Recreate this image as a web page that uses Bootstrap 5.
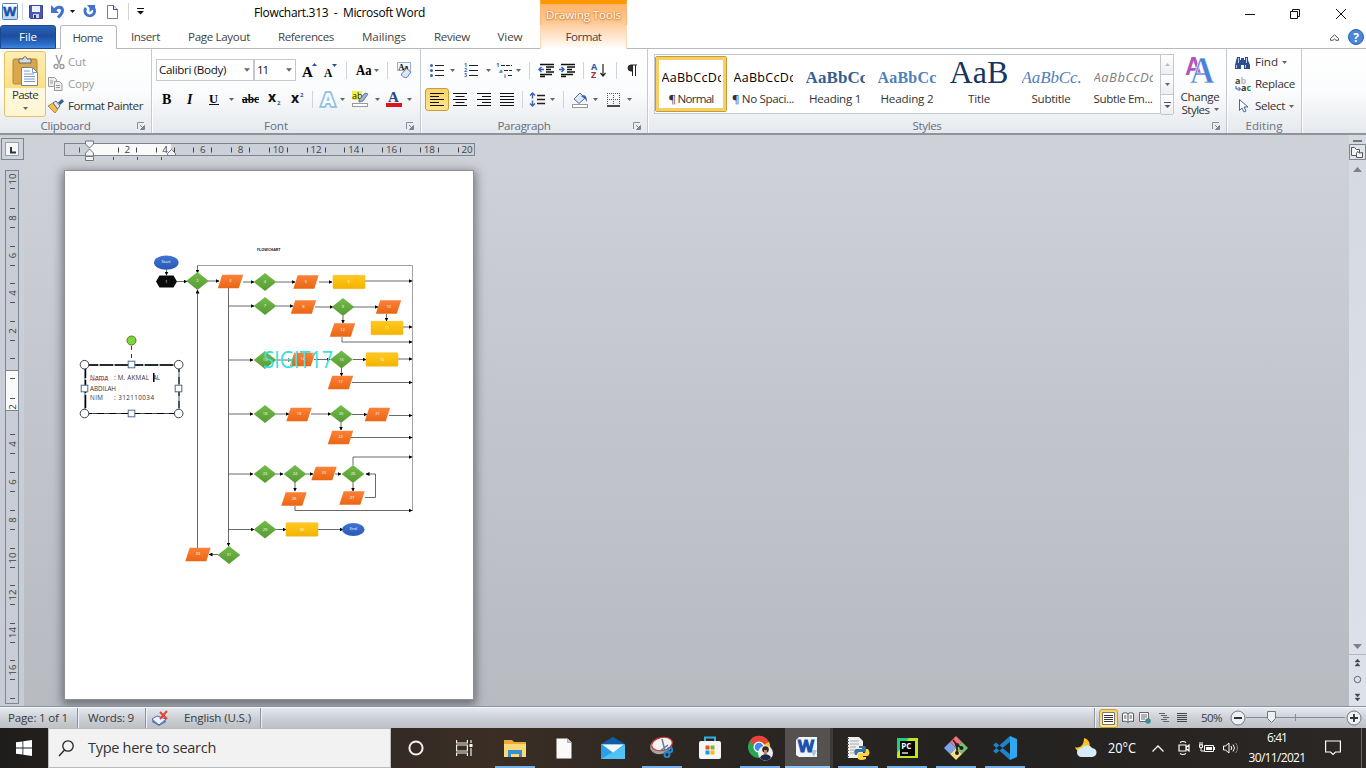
<!DOCTYPE html>
<html lang="en">
<head>
<meta charset="utf-8">
<title>Flowchart.313 - Microsoft Word</title>
<meta name="viewport" content="width=device-width, initial-scale=1">
<link rel="stylesheet" href="https://cdn.jsdelivr.net/npm/bootstrap@5.3.0/dist/css/bootstrap.min.css">
<style>
body{width:1366px;height:768px;overflow:hidden;font-family:"Open Sans","Noto Sans",sans-serif;font-size:11.6px;line-height:16px;color:#333;background:#fff}
svg{display:block;flex:none;overflow:visible}
[data-w]{display:inline-block;white-space:nowrap}
.titlebar{height:25px;display:grid;grid-template-columns:254px 286px 87px 1fr 139px}
.qat{display:grid;grid-template-columns:19px 6px 22px 20px 11px 22px 24px 9px 14px;align-items:center;justify-items:center;height:23px}
.title-text{font-size:12px;color:#000;padding-top:5px}
.ctx-head{background:linear-gradient(#ffb469,#ffcc9b);border-top:4px solid #ff9800;border-left:1px solid #f5b877;border-right:1px solid #f5b877;color:#fff;text-shadow:0 0 2px #c56a1d,0 1px 2px #c77c3b}
.tabs{height:24px;display:grid;grid-template-columns:56px 4px 57px 57px 90px 84px 72px 64px 56px 87px 1fr 22px 21px;border-bottom:1px solid #b6babf;color:#444}
.tab-i{display:flex;align-items:center;justify-content:center}
.tab-file{background:linear-gradient(#2b63b8,#1d4d9f 45%,#2a6bc4 80%,#3d86dc);color:#fff;border:1px solid #1b4a95;border-radius:3px 3px 0 0}
.tab-home{background:#fff;border:1px solid #b6babf;border-bottom:0;border-radius:3px 3px 0 0;height:24px;position:relative;padding-right:2px}
.tab-ctx{background:linear-gradient(#ffd0a2,#fff);border-left:1px solid #fbd9b5;border-right:1px solid #fbd9b5}
.ribbon{height:86px;display:grid;grid-template-columns:152px 269px 227px 579px 75px 1fr;background:linear-gradient(#fff,#fbfcfd 50%,#e5e8ed);border-bottom:2px solid #8f949b}
.grp{border-right:1px solid #c5cad1;box-shadow:1px 0 #fff;display:flex;flex-direction:column;min-width:0}
.grp-body{height:69px;flex:none}
.grp-label{display:grid;grid-template-columns:1fr 20px;color:#666f7c;height:15px;align-items:center}
.grp-label span{justify-self:center}
.grp-label svg{justify-self:end;margin-right:6px}
.paste-btn{width:42px;height:66px;margin:2px 2px 0 4px;border:1px solid #e5c365;border-radius:3px;background:linear-gradient(#fdeeb4,#fbdf87 56%,#fff8dc 57%,#fff6d2);align-items:center}
.cmds{padding-top:2px}
.cmd{height:22px;display:grid;grid-template-columns:20px 1fr;align-items:center}
.off{color:#9a9a9a}
.trow{display:grid;align-items:center;justify-items:center;height:22px}
.fr1{grid-template-columns:98px 42px 26px 16px 16px 19px 6px 16px 18px;margin:10px 0 0 4px}
.fr2{grid-template-columns:22px 24px 24px 10px 28px 20px 26px 4px 27px 3px 32px 3px 30px 1px;margin:7px 0 0 4px}
.pr1{grid-template-columns:25px 7px 29px 7px 24px 5px 16px 17px 26px 6px 24px 12px 20px;margin:10px 0 0 3px}
.pr2{grid-template-columns:25px 22px 25px 22px 9px 21px 8px 15px 19px 10px 26px 6px;margin:7px 0 0 3px}
.combo{border:1px solid #c4c8ce;background:#fff;height:22px;width:100%;display:flex;align-items:center;justify-content:space-between;padding:0 3px 0 2px;color:#111}
.vsep{width:1px;height:17px;background:#d0d4da}
.serif{font-family:"Liberation Serif",serif;color:#1f1f1f;font-weight:700}
.tog{width:24px;height:23px;border:1px solid #c99c3a;border-radius:3px;background:linear-gradient(#fbd36c,#fee58c);display:flex;align-items:center;justify-content:center}
.status .tog{height:19px;width:19px}
.gallery{margin:5px 0 0 6px;width:506px;height:60px;border:1px solid #c4c8ce;border-right:0;background:#fff;display:grid;grid-template-columns:repeat(7,72px)}
.sty{display:flex;flex-direction:column;align-items:center;color:#333}
.prev{width:59px;height:36px;overflow:hidden;white-space:nowrap;color:#000;font-size:12.5px;line-height:45px;flex:none}
.sty.on{outline:3px solid #f6cf67;outline-offset:-4px;border:1px solid #c79a35;border-radius:2px;margin:1px 0}
.sty.on .prev{height:34px;line-height:41px}
.h-ser{font-family:"Liberation Serif",serif}
.prev.h1p{font-size:17px;font-weight:700;color:#365f91}.prev.h2p{font-size:16px;font-weight:700;color:#4f81bd}
.prev.tip{font-size:32px;color:#17365d;line-height:34px}
.prev.sbp{font-size:17px;font-style:italic;color:#4f81bd}.prev.sep{font-size:13px;font-style:italic;color:#808080}
.gbtns{width:14px;height:60px;margin-top:5px;display:grid;grid-template-rows:20px 20px 20px;border:1px solid #c4c8ce}
.gbtns div{display:flex;align-items:center;justify-content:center;border-bottom:1px solid #c4c8ce;background:linear-gradient(#fff,#eceef2)}
.chg{width:52px;padding-top:6px;line-height:13px}
.chg>span{margin-top:5px}
.edit-l{line-height:15px}
.work{height:572px;display:grid;grid-template-columns:24px 1fr 17px;background:linear-gradient(#cfd2d8,#c3c6cc 45%,#b7bbc0)}
.lft{background:linear-gradient(#cbd0d9,#c6ccd6)}
.rgt{background:linear-gradient(#d4d9e2,#dce1ea)}
.page-sheet{width:410px;height:530px;margin-left:40px;background:#fff;border:1px solid #8d9197;box-shadow:0 3px 9px 2px rgba(60,64,70,.6)}
.status{height:21px;display:grid;grid-template-columns:78px 66px 32px 85px 834px 27px 12px 22px 16px 20px 35px 1fr;background:linear-gradient(#e4e8f0,#cdd1d7 50%,#bdc1c5);border-top:1px solid #f4f6f9;box-shadow:0 -1px #8f949b;align-items:center;justify-items:center;color:#3b3b3b;position:relative}
.bar{border-right:1px solid #8e949c;box-shadow:1px 0 #eef;height:20px;width:100%;display:flex;align-items:center}
.task{height:40px;background:linear-gradient(90deg,#1f1d1b,#332a24 28%,#3b2e24 36%,#2c2723 50%,#242220 70%,#2a2725);display:grid;grid-template-columns:48px 343px 50px 46px 56px 41px 58px 40px 56px 44px 50px 52px 46px 52px 46px 73px 36px 34px 17px 30px 16px 14px 58px 35px 1fr;align-items:center;color:#fff}
.task>div{height:40px;display:flex;align-items:center;justify-content:center;font-size:12px}
.task .run{border-bottom:2px solid #76b2e8;width:40px;justify-self:center;padding-top:2px}
.task .act{background:#55514e;width:45px;justify-self:center;border-bottom:2px solid #8cc3f2;box-shadow:3px 0 #3d3a37}
.task .find{background:#f2f2f2;color:#333;justify-content:flex-start;border:1px solid #bbb;font-size:14.5px;gap:14px}
</style>
</head>
<body>
<svg width="0" height="0" class="position-absolute">
<symbol id="car" viewBox="0 0 7 4"><path d="M0 0h7L3.5 4z" fill="#666"/></symbol>
<symbol id="dlg" viewBox="0 0 8 8"><path d="M.5 7V.5H7" fill="none" stroke="#8a8f97"/><path d="M3 3l3 3M7.5 3.5v4h-4z" stroke="#7d838c" fill="#7d838c"/></symbol>
<linearGradient id="wg" x2="0" y2="1"><stop stop-color="#fff"/><stop offset="1" stop-color="#b9d0ee"/></linearGradient>
</svg>

<header class="titlebar">
 <div class="qat">
  <svg width="16" height="17" viewBox="0 0 16 17"><rect x=".5" y=".5" width="15" height="16" rx="1" fill="url(#wg)" stroke="#4a7fc0"/><text x="1.2" y="13" font-size="12.5" font-weight="700" fill="#1b51a4" textLength="13" lengthAdjust="spacingAndGlyphs" stroke="#1b51a4" stroke-width=".5">W</text></svg>
  <div class="vsep"></div>
  <svg width="14" height="14" viewBox="0 0 14 14"><path d="M.5.5h13v13h-12l-1-1z" fill="#4b57b5" stroke="#3b459b"/><path d="M3 1h8v6H3z" fill="#eef2fb"/><path d="M4 9h6v4H4z" fill="#cfd6e8"/><path d="M5 10h2v3H5z" fill="#30397f"/></svg>
  <svg width="13" height="13" viewBox="0 0 13 13"><path d="M3.500 5.500C6 1 11.500 1.500 11.500 5.500c0 3-2 4.500-4.500 7" fill="none" stroke="#4173d0" stroke-width="3"/><path d="M0 0v8h8z" fill="#4173d0"/></svg>
  <svg width="5" height="3" viewBox="0 0 7 4"><path d="M0 0h7L3.500 4z" fill="#111"/></svg>
  <svg width="13" height="13" viewBox="0 0 13 13"><path d="M3 3a4.800 4.800 0 1 0 7.500 0" fill="none" stroke="#4173d0" stroke-width="3"/><path d="M4 0h8v3L6.500 7V3z" fill="#4173d0"/></svg>
  <svg width="11" height="14" viewBox="0 0 11 14"><path d="M.5.5h6l4 4v9H.5z" fill="#fff" stroke="#6f7fa0"/><path d="M6.500.5v4h4" fill="#dde6f5" stroke="#344a77"/></svg>
  <div class="vsep"></div>
  <svg width="7" height="7" viewBox="0 0 7 7"><path d="M0 .5h7" stroke="#111"/><path d="M0 3h7L3.500 6.500z" fill="#111"/></svg>
 </div>
 <div class="title-text"><span data-w="171">Flowchart.313&nbsp; -&nbsp; Microsoft Word</span></div>
 <div class="ctx-head d-flex align-items-center justify-content-center"><span data-w="75">Drawing Tools</span></div>
 <div></div>
 <svg width="139" height="25" viewBox="1227 0 139 25" fill="none" stroke="#111"><path d="M1245 14.500h10M1336 9l10 10M1346 9l-10 10M1290.500 11.500h7v7h-7zM1292.500 11v-1.500h7v7h-1.500"/></svg>
</header>
<nav class="tabs">
 <div class="tab-i tab-file"><span data-w="18">File</span></div><div></div>
 <div class="tab-i tab-home"><span data-w="30">Home</span></div>
 <div class="tab-i"><span data-w="29">Insert</span></div>
 <div class="tab-i"><span data-w="62">Page Layout</span></div>
 <div class="tab-i"><span data-w="56">References</span></div>
 <div class="tab-i"><span data-w="44">Mailings</span></div>
 <div class="tab-i"><span data-w="36">Review</span></div>
 <div class="tab-i pe-1"><span data-w="25">View</span></div>
 <div class="tab-i tab-ctx"><span data-w="36">Format</span></div><div></div>
 <div class="tab-i"><svg width="9" height="7" viewBox="0 0 9 7" fill="none" stroke="#555"><path d="M.5 4.500L4.500.8l4 3.700v1.800H6L4.500 5 3 6.300H.5z"/></svg></div>
 <div class="tab-i"><svg width="16" height="16" viewBox="0 0 16 16"><circle cx="8" cy="8" r="7.500" fill="#4a86da" stroke="#2d62b2"/><text x="8" y="12.500" font-size="12" font-weight="700" fill="#fff" text-anchor="middle">?</text></svg></div>
</nav>

<section class="ribbon">
 <div class="grp">
  <div class="grp-body d-flex">
   <div class="paste-btn d-flex flex-column">
    <svg width="28" height="31" viewBox="0 0 28 31" class="mt-1"><rect x="2" y="3" width="24" height="25" rx="1.500" fill="#dba74d" stroke="#b98432"/><path d="M8 7V3h4c0-3 4-3 4 0h4v4z" fill="#d8dce2" stroke="#666"/><path d="M10.500 11.500h11l5 5v13h-16z" fill="#fff" stroke="#6b83ad"/><path d="M21.500 11.500v5h5M13 15h6M13 18h10M13 20.500h11M13 23h11M13 25.500h11" stroke="#7d9ac6" fill="none"/></svg>
    <span data-w="26">Paste</span>
    <svg width="5" height="3" class="mt-1"><use href="#car"/></svg>
   </div>
   <div class="cmds flex-grow-1">
    <div class="cmd off"><svg width="14" height="15" viewBox="0 0 14 15" fill="none" stroke="#999" stroke-width="1.300" class="ms-1"><path d="M4 0l3.500 9.500M10 0L6.500 9.500"/><circle cx="4" cy="11.500" r="2"/><circle cx="10" cy="11.500" r="2"/></svg><span data-w="18">Cut</span></div>
    <div class="cmd off"><svg width="15" height="14" viewBox="0 0 15 14" fill="#eee" stroke="#999"><path d="M.5.5h6l2 2v7h-8z"/><path d="M6.500 4.500h5l2.500 2.500v6.500H6.500zM8 8.500h4M8 10.500h4M2 4h3M2 6h3"/></svg><span data-w="26">Copy</span></div>
    <div class="cmd"><svg width="16" height="14" viewBox="0 0 16 14"><path d="M0 7l5-3 5 6-3 4z" fill="#f3c14b" stroke="#8d6a1f" stroke-width=".7"/><path d="M5 4l3-2 4 5-2.500 3z" fill="#dde5f2" stroke="#667"/><path d="M10 3.500L14 0l2 2.500-4 3.500z" fill="#3d5b9c"/></svg><span data-w="75">Format Painter</span></div>
   </div>
  </div>
  <div class="grp-label"><span data-w="50">Clipboard</span><svg width="8" height="8"><use href="#dlg"/></svg></div>
 </div>

 <div class="grp">
  <div class="grp-body">
   <div class="trow fr1">
    <div class="combo"><span data-w="67">Calibri (Body)</span><svg width="6" height="4"><use href="#car"/></svg></div>
    <div class="combo"><span data-w="11">11</span><svg width="6" height="4"><use href="#car"/></svg></div>
    <svg width="15" height="14" viewBox="0 0 15 14"><text x="0" y="13.500" font-size="15" class="serif">A</text><path d="M10 3h5l-2.500-3z" fill="#2c4f9b"/></svg>
    <svg width="13" height="14" viewBox="0 0 13 14"><text x="0" y="13.500" font-size="11.500" class="serif">A</text><path d="M8 1h5l-2.500 3z" fill="#2c4f9b"/></svg>
    <div class="vsep"></div>
    <svg width="15" height="14" viewBox="0 0 15 14"><text y="12" font-size="14" class="serif" textLength="15.500" lengthAdjust="spacingAndGlyphs">Aa</text></svg>
    <svg width="5" height="3"><use href="#car"/></svg>
    <div class="vsep"></div>
    <svg width="17" height="16" viewBox="0 0 17 16"><path d="M1.500.5h13v8h-13z" fill="#f4f8ff" stroke="#9aa9c4"/><text x="2.500" y="7.500" font-size="8" class="serif">Aa</text><path d="M5.500 12l5-5.500 4.500 3.500-4 5.500c-2 .5-6-1-5.500-3.500z" fill="#dbe6f8" stroke="#5d7db5"/></svg>
   </div>
   <div class="trow fr2">
    <svg width="10" height="12" viewBox="0 0 10 12"><text y="10.500" font-size="14" class="serif">B</text></svg>
    <svg width="8" height="12" viewBox="0 0 8 12"><text x="1" y="10.500" font-size="14" font-style="italic" class="serif">I</text></svg>
    <svg width="10" height="12" viewBox="0 0 10 12"><text y="9.500" font-size="12.500" class="serif">U</text><path d="M0 11.500h10" stroke="#111"/></svg>
    <svg width="5" height="3"><use href="#car"/></svg>
    <svg width="17" height="12" viewBox="0 0 17 12"><text y="9.500" font-size="12" class="serif" textLength="17" lengthAdjust="spacingAndGlyphs">abc</text><path d="M0 6.500h17" stroke="#111"/></svg>
    <svg width="13" height="12" viewBox="0 0 13 12"><text y="9" font-size="14" font-weight="700" fill="#111">x</text><text x="9" y="12" font-size="6" fill="#2b57ad" font-weight="700">2</text></svg>
    <svg width="13" height="12" viewBox="0 0 13 12"><text y="10" font-size="14" font-weight="700" fill="#111">x</text><text x="9" y="4" font-size="6" fill="#2b57ad" font-weight="700">2</text></svg>
    <div class="vsep"></div>
    <svg width="16" height="15" viewBox="0 0 16 15"><text x="1.500" y="14" font-size="18" font-weight="700" fill="#fff" stroke="#8fc0e4" stroke-width="3.500" textLength="13" lengthAdjust="spacingAndGlyphs" paint-order="stroke">A</text></svg>
    <svg width="5" height="3"><use href="#car"/></svg>
    <svg width="17" height="16" viewBox="0 0 17 16"><rect width="10" height="9" fill="#f6ee4e"/><text y="7.500" font-size="9" fill="#222">ab</text><path d="M7 9l6-7 3 1-5 7-4 1z" fill="#9db3d8" stroke="#49618f" stroke-width=".8"/><rect x=".5" y="12.500" width="15" height="3" fill="#fff" stroke="#999"/></svg>
    <svg width="5" height="3"><use href="#car"/></svg>
    <svg width="16" height="16" viewBox="0 0 16 16"><text x="2" y="11" font-size="15" fill="#27498e" font-family="Liberation Serif" font-weight="700">A</text><rect y="12" width="16" height="4" fill="#e1121b"/></svg>
    <svg width="5" height="3"><use href="#car"/></svg>
   </div>
  </div>
  <div class="grp-label"><span data-w="24">Font</span><svg width="8" height="8"><use href="#dlg"/></svg></div>
 </div>

 <div class="grp">
  <div class="grp-body">
   <div class="trow pr1">
    <svg width="14" height="13" viewBox="0 0 14 13"><path d="M5 1.500h9M5 6.500h9M5 11.500h9" stroke="#222"/><g fill="#3a62b4"><circle cx="1.500" cy="1.500" r="1.500"/><circle cx="1.500" cy="6.500" r="1.500"/><circle cx="1.500" cy="11.500" r="1.500"/></g></svg>
    <svg width="5" height="3"><use href="#car"/></svg>
    <svg width="14" height="14" viewBox="0 0 14 14"><path d="M5 2.500h9M5 7.500h9M5 12.500h9" stroke="#222"/><g fill="#3a62b4" font-size="5.500" font-weight="700"><text y="4">1</text><text y="9">2</text><text y="14">3</text></g></svg>
    <svg width="5" height="3"><use href="#car"/></svg>
    <svg width="17" height="15" viewBox="0 0 17 15"><path d="M5 2.500h11M8 7.500h8M12 12.500h4" stroke="#222" stroke-dasharray="4 1"/><g fill="#3a62b4" font-size="6" font-weight="700"><text y="4">1</text><text x="3" y="9.500">a</text><text x="8" y="15">i</text></g></svg>
    <svg width="5" height="3"><use href="#car"/></svg>
    <div class="vsep"></div>
    <svg width="16" height="13" viewBox="0 0 16 13"><path d="M2 .5h14M8 3h8M8 5.500h5M8 8h8M2 10.500h12M2 12.500h5" stroke="#111" stroke-width="1.300"/><path d="M6 5.500H1M3.500 3L1 5.500 3.500 8" stroke="#3a62b4" fill="none" stroke-width="1.500"/></svg>
    <svg width="16" height="13" viewBox="0 0 16 13"><path d="M2 .5h14M8 3h8M8 5.500h5M8 8h8M2 10.500h12M2 12.500h5" stroke="#111" stroke-width="1.300"/><path d="M0 5.500h5M2.500 3L5 5.500 2.500 8" stroke="#3a62b4" fill="none" stroke-width="1.500"/></svg>
    <div class="vsep"></div>
    <svg width="15" height="16" viewBox="0 0 15 16"><text x="0" y="7.500" font-size="9" font-weight="700" fill="#2c57ad">A</text><text x="0" y="15.500" font-size="9" font-weight="700" fill="#a03341">Z</text><path d="M12 2v12M9.500 11l2.500 3 2.500-3" stroke="#222" stroke-width="1.200" fill="none"/></svg>
    <div class="vsep"></div>
    <svg width="10" height="13" viewBox="0 0 10 13"><path d="M10 1H4a3 3 0 0 0 0 6h1V1M5.500 1v11M8.500 1v11" stroke="#222" fill="#333"/></svg>
   </div>
   <div class="trow pr2">
    <div class="tog"><svg width="14" height="13" viewBox="0 0 14 13"><path d="M0 .5h14M0 3.500h9M0 6.500h14M0 9.500h9M0 12.500h14" stroke="#111"/></svg></div>
    <svg width="14" height="13" viewBox="0 0 14 13"><path d="M0 .5h14M2.500 3.500h9M0 6.500h14M2.500 9.500h9M0 12.500h14" stroke="#111"/></svg>
    <svg width="14" height="13" viewBox="0 0 14 13"><path d="M0 .5h14M5 3.500h9M0 6.500h14M5 9.500h9M0 12.500h14" stroke="#111"/></svg>
    <svg width="14" height="13" viewBox="0 0 14 13"><path d="M0 .5h14M0 3.500h14M0 6.500h14M0 9.500h14M0 12.500h14" stroke="#111"/></svg>
    <div class="vsep"></div>
    <svg width="15" height="15" viewBox="0 0 15 15"><path d="M7 3.500h8M7 7.500h8M7 11.500h8" stroke="#222" stroke-width="1.300"/><path d="M2.500 1v5.500M2.500 8.500V14M0 3.500L2.500 1 5 3.500M0 11.500L2.500 14 5 11.500" fill="none" stroke="#3a62b4" stroke-width="1.400"/></svg>
    <svg width="5" height="3"><use href="#car"/></svg>
    <div class="vsep"></div>
    <svg width="17" height="16" viewBox="0 0 17 16"><path d="M2 7l6-6 5 5-6 5.500z" fill="#dfe8f6" stroke="#506c9e"/><path d="M9 4c4-2 6 0 6 6l-2-3" fill="#3a62b4"/><rect x=".5" y="12.500" width="15" height="3" fill="#fff" stroke="#999"/></svg>
    <svg width="5" height="3"><use href="#car"/></svg>
    <svg width="13" height="14" viewBox="0 0 13 14"><path d="M.5 0v12M12.500 0v12M6.500 0v12M0 .5h13M0 6.500h13" stroke="#555" stroke-dasharray="1 1"/><path d="M0 13h13" stroke="#111" stroke-width="1.500"/></svg>
    <svg width="5" height="3"><use href="#car"/></svg>
   </div>
  </div>
  <div class="grp-label"><span data-w="53">Paragraph</span><svg width="8" height="8"><use href="#dlg"/></svg></div>
 </div>

 <div class="grp">
  <div class="grp-body d-flex">
   <div class="gallery">
    <div class="sty on"><div class="prev"><span data-w="62">AaBbCcDc</span></div><span data-w="45">¶ Normal</span></div>
    <div class="sty"><div class="prev"><span data-w="62">AaBbCcDc</span></div><span data-w="62">¶ No Spaci...</span></div>
    <div class="sty"><div class="prev h-ser h1p"><span data-w="62">AaBbCc</span></div><span data-w="52">Heading 1</span></div>
    <div class="sty"><div class="prev h-ser h2p"><span data-w="59">AaBbCc</span></div><span data-w="53">Heading 2</span></div>
    <div class="sty"><div class="prev h-ser tip"><span data-w="59">AaB</span></div><span data-w="22">Title</span></div>
    <div class="sty"><div class="prev h-ser sbp"><span data-w="60">AaBbCc.</span></div><span data-w="39">Subtitle</span></div>
    <div class="sty"><div class="prev sep"><span data-w="62">AaBbCcDc</span></div><span data-w="59">Subtle Em...</span></div>
   </div>
   <div class="gbtns"><div><svg width="5" height="3" viewBox="0 0 7 4"><path d="M0 4h7L3.500 0z" fill="#bbb"/></svg></div><div><svg width="5" height="3"><use href="#car"/></svg></div><div><svg width="7" height="6" viewBox="0 0 7 6"><path d="M0 .5h7" stroke="#555"/><path d="M.5 3h6l-3 3z" fill="#555"/></svg></div></div>
   <div class="chg d-flex flex-column align-items-center">
    <svg width="30" height="30" viewBox="0 0 30 30"><text x="0" y="20" font-size="26" font-family="Liberation Sans" font-weight="700" fill="#b455bd" textLength="17" lengthAdjust="spacingAndGlyphs">A</text><text x="5" y="28" font-size="37" font-family="Liberation Serif" font-weight="700" fill="#4a82d8" stroke="#fff" stroke-width=".6" textLength="24.500" lengthAdjust="spacingAndGlyphs">A</text></svg>
    <span data-w="39">Change</span>
    <div class="d-flex align-items-center gap-1"><span data-w="28">Styles</span><svg width="5" height="3"><use href="#car"/></svg></div>
   </div>
  </div>
  <div class="grp-label"><span data-w="29">Styles</span><svg width="8" height="8"><use href="#dlg"/></svg></div>
 </div>

 <div class="grp">
  <div class="grp-body cmds ps-2">
   <div class="cmd"><svg width="15" height="13" viewBox="0 0 15 13"><path d="M2 1h3v3h1V2h3v2h1V1h3v3l2 5v4H9V9H6v4H0V9z" fill="#2d4f8f"/><path d="M1.500 9v3M10.500 9v3M3.500 2v5M11.500 2v5" stroke="#b4cbef"/></svg><div class="d-flex align-items-center"><span data-w="23">Find</span><svg width="5" height="3" class="ms-1"><use href="#car"/></svg></div></div>
    <div class="cmd"><svg width="16" height="15" viewBox="0 0 16 15"><text y="7" font-size="9" font-weight="700" fill="#444">a<tspan fill="#bbb">b</tspan></text><text x="6" y="14" font-size="9" font-weight="700" fill="#333">a<tspan fill="#1c8a3c">c</tspan></text><path d="M1 9v3h4M3.500 10l2 2-2 2" fill="none" stroke="#2c57ad"/></svg><span data-w="40">Replace</span></div>
   <div class="cmd"><svg width="10" height="14" viewBox="0 0 10 14" class="ms-1"><path d="M.5.500v11L3 9l2 4 2-1-2-4h4z" fill="#fff" stroke="#4a669c"/></svg><div class="d-flex align-items-center"><span data-w="30">Select</span><svg width="5" height="3" class="ms-1"><use href="#car"/></svg></div></div>
  </div>
  <div class="text-center edit-l"><span data-w="37" class="text-secondary">Editing</span></div>
 </div>
</section>

<main class="work">
 <div class="lft"><svg id="vr" width="24" height="572" viewBox="0 135 24 572"></svg></div>
 <div>
  <svg id="hr" width="470" height="35" viewBox="24 135 470 35"></svg>
  <div class="page-sheet"><svg id="doc" width="408" height="528" viewBox="65 171 408 528"></svg></div>
 </div>
 <div class="rgt"><svg width="17" height="572" viewBox="1349 135 17 572"><path d="M1353 141h9" stroke="#777" stroke-width="2"/><path d="M1349.500 144.500h16v15h-16z" fill="#dfe3ea" stroke="#80858d"/><path d="M1351.500 147.500h3l2 2h3v6h-8z" fill="#f3f5f8" stroke="#555"/><path d="M1357.500 151.500l2 1.500 3-.5v5h-6v-4z" fill="#f3f5f8" stroke="#555"/><path d="M1353 172h9l-4.500-5zM1353 644h9l-4.500 5z" fill="#7c828c"/><path d="M1349 654.500h17" stroke="#b3b8c1"/><path d="M1355 662h5l-2.500-3zM1355 666h5l-2.500-3zM1355 694h5l-2.500 3zM1355 698h5l-2.500 3z" fill="#444" stroke="#444" stroke-width=".4"/><circle cx="1357.500" cy="679.500" r="3.200" fill="none" stroke="#666"/></svg></div>
</main>

<footer class="status">
 <div class="bar ps-2"><span data-w="60">Page: 1 of 1</span></div>
 <div class="bar ps-2 ms-1"><span data-w="46">Words: 9</span></div>
 <svg width="16" height="15" viewBox="0 0 16 15"><path d="M0 8l5-3 9 3-7 6z" fill="#eef4fc" stroke="#466fae"/><path d="M0 9l7 5 7-5v2l-7 4-7-4z" fill="#4d78bb"/><path d="M8 1l7 7M15 0L8 8" stroke="#e0472f" stroke-width="2"/></svg>
 <div class="bar ps-2"><span data-w="67">English (U.S.)</span></div>
 <div class="bar"></div>
 <div class="tog"><svg width="13" height="13" viewBox="0 0 13 13"><path d="M.5.500h12v12H.5z" fill="#fff" stroke="#777"/><path d="M2 3.500h9M2 5.500h9M2 7.500h9M2 9.500h9" stroke="#333"/></svg></div>
 <svg width="12" height="12" viewBox="0 0 12 12"><path d="M.5 1.500c2-1 4-1 5.500.500 1.500-1.500 3.500-1.500 5.500-.500v8c-2-.500-4-.500-5.500 1-1.500-1.500-3.500-1.500-5.500-1zM6 2v8M2 4h2.500M2 6h2.500M7.500 4H10M7.500 6H10" fill="#fff" stroke="#555"/></svg>
 <svg width="12" height="12" viewBox="0 0 12 12"><path d="M.5.500h9v9h-9zM2 3h6M2 5h6M2 7h4" fill="#fff" stroke="#666"/><circle cx="9" cy="9" r="2.800" fill="#3c8b9c"/></svg>
 <svg width="10" height="10" viewBox="0 0 10 10"><path d="M0 .5h6M2 2.500h6M4 4.500h6M2 6.500h6M4 8.500h6" stroke="#666"/></svg>
 <svg width="10" height="10" viewBox="0 0 10 10"><path d="M0 .5h10M0 2.500h10M0 4.500h10M0 6.500h10M0 8.500h10" stroke="#444"/></svg>
 <span data-w="21" class="ms-1">50%</span>
 <svg width="139" height="20" viewBox="1227 707 139 20"><path d="M1246 716.500h99" stroke="#888d94"/><path d="M1295.500 713v7" stroke="#888d94"/><g fill="#edf0f4" stroke="#72777f"><circle cx="1238" cy="717" r="7"/><circle cx="1354" cy="717" r="7"/><path d="M1267.500 710.500h8v7l-4 4-4-4z"/></g><path d="M1234 717h8M1350 717h8M1354 713v8" stroke="#333" stroke-width="1.800"/></svg>
</footer>

<div class="task">
 <div><svg width="16" height="16" viewBox="0 0 16 16" fill="#fff"><path d="M0 2.300L6.500 1.400v6.200H0zM7.300 1.300L16 0v7.600H7.300zM0 8.400h6.500v6.200L0 13.700zM7.300 8.400H16V16l-8.700-1.300z"/></svg></div>
 <div class="find"><svg width="17" height="17" viewBox="0 0 17 17" fill="none" stroke="#222" stroke-width="1.300" class="ms-2"><circle cx="11" cy="6" r="5.200"/><path d="M7.500 10L2 16"/></svg><span data-w="128">Type here to search</span></div>
 <div><svg width="16" height="16"><circle cx="8" cy="8" r="6.600" fill="none" stroke="#f2f2f2" stroke-width="2"/></svg></div>
 <div><svg width="17" height="16" viewBox="0 0 17 16" fill="none" stroke="#eee" stroke-width="1.200"><path d="M.6 0v3h10.800V0M.6 16v-3h10.800v3M.6 5h10.800v6H.6zM15 0v3M15 8v8"/><path d="M13.500 4h3v3h-3z" fill="#fff" stroke="none"/></svg></div>
 <div class="run"><svg width="22" height="19" viewBox="0 0 22 19"><path d="M0 1h8l2 2h12v15H0z" fill="#e9a93c"/><path d="M0 5h22v13H0z" fill="#fcd978"/><path d="M4 18v-7h14v7h-3v-3H7v3z" fill="#3b8dd3"/></svg></div>
 <div><svg width="16" height="21" viewBox="0 0 16 21"><path d="M.5.500h11l4 4v16H.5z" fill="#fafafa"/><path d="M11.500.500v4h4" fill="#ccc" stroke="#888" stroke-width=".6"/></svg></div>
 <div><svg width="24" height="22" viewBox="0 0 24 22"><path d="M0 7l12-7 12 7v3H0z" fill="#0d5ea8"/><path d="M0 7v15h24V7z" fill="#2ba0e6"/><path d="M0 22L24 8v14z" fill="#50c2f5"/><path d="M1 7.500h22l-11 8z" fill="#f6f6f6"/></svg></div>
 <div class="run"><svg width="24" height="22" viewBox="0 0 24 22"><ellipse cx="11" cy="9" rx="11" ry="8" fill="#a9a4a4" transform="rotate(-12 11 9)"/><ellipse cx="12" cy="7" rx="10.500" ry="6.500" fill="#f3f3f3" stroke="#c33" stroke-width="1.200" transform="rotate(-12 12 7)"/><path d="M12 2l3 12M18 8l-8 6" stroke="#667c8f" stroke-width="1.500"/><g fill="none" stroke="#2988c9" stroke-width="2"><circle cx="17" cy="17.500" r="2.500"/><circle cx="20" cy="13" r="2.200"/></g></svg></div>
 <div><svg width="24" height="24" viewBox="0 0 24 24"><path d="M7 6V1.500h10V6" fill="none" stroke="#37aee2" stroke-width="2"/><rect x="1" y="5" width="22" height="18" rx="2" fill="#f5f5f5"/><path d="M7.500 9.500h4v4h-4z" fill="#f04e24"/><path d="M12.500 9.500h4v4h-4z" fill="#7db72f"/><path d="M7.500 14.500h4v4h-4z" fill="#0aa1e2"/><path d="M12.500 14.500h4v4h-4z" fill="#fdb813"/></svg></div>
 <div class="run"><svg width="25" height="26" viewBox="0 0 25 26"><circle cx="11" cy="12" r="11" fill="#2aa652"/><path d="M11 12L1.500 6.500A11 11 0 0 1 21 7z" fill="#e84336"/><path d="M11 12l10-5A11 11 0 0 1 12 23z" fill="#fbc318"/><circle cx="11" cy="12" r="5.500" fill="#fff"/><circle cx="11" cy="12" r="4.300" fill="#4285f4"/><circle cx="17.500" cy="18" r="7.500" fill="#eee"/><circle cx="17.500" cy="14.500" r="3.300" fill="#372820"/><path d="M16 15h3v4h-3z" fill="#b98563"/><path d="M12 23c1-5 10-5 11 0a7.500 7.500 0 0 1-11 0z" fill="#1d294a"/></svg></div>
 <div class="act"><svg width="22" height="21" viewBox="0 0 22 21"><path d="M3 0h18v20H3l-3-2V3z" fill="#f0f4fb"/><path d="M14 13h7l-3 7z" fill="#b4c3da"/><text x="2" y="15" font-size="16" font-weight="700" fill="#1951aa" textLength="16" lengthAdjust="spacingAndGlyphs" stroke="#1951aa">W</text></svg></div>
 <div class="run"><svg width="24" height="24" viewBox="0 0 24 24"><path d="M2 1h11l4 4v17H2z" fill="#eee"/><path d="M4 5h9M4 8h9M4 11h6M4 14h4M4 17h4" stroke="#aaa"/><path d="M2 2v20" stroke="#555" stroke-dasharray="1 2" stroke-width="2"/><path d="M13 10h5q2 0 2 3v3h-6q-3 0-3 3H9q-2-5 1-6h6v-1h-3z" fill="#3673a5"/><path d="M20 13h2q3 4 0 7h-5v1h3v2q-5 2-8 0v-4q0-2 2-2h4q2 0 2-4z" fill="#ffd342"/></svg></div>
 <div class="run"><svg width="21" height="22" viewBox="0 0 21 22"><path d="M0 1h21v20H0z" fill="#bfe621"/><path d="M0 1h12L0 16z" fill="#22d07c"/><path d="M3 4h15v15H3z" fill="#050505"/><text x="4.300" y="11.500" font-size="8" font-weight="700" fill="#fff">PC</text><path d="M5 16h6" stroke="#fff" stroke-width="1.300"/></svg></div>
 <div class="run"><svg width="24" height="24" viewBox="0 0 24 24"><path d="M12 0l6 6-6 6-6-6z" fill="#f07580"/><path d="M6 6l6 6-6 6-6-6z" fill="#7ba4ee"/><path d="M18 6l6 6-6 6-6-6z" fill="#79c370"/><path d="M12 12l6 6-6 6-6-6z" fill="#f4df84"/><path d="M9 4l4 5v8M13 9l5 3" fill="none" stroke="#222" stroke-width="1.700"/><circle cx="13" cy="9" r="2" fill="#222"/><circle cx="13" cy="17" r="2" fill="#222"/><circle cx="17.500" cy="12" r="2" fill="#222"/></svg></div>
 <div class="run"><svg width="24" height="24" viewBox="0 0 24 24"><path d="M18 5L3 17.500 0 15 17 0zM18 19L3 6.500 0 9l17 15z" fill="#1f83c9"/><path d="M17 0l7 3v18l-7 3z" fill="#2fa8f1"/></svg></div>
 <div class="justify-content-end pe-1"><svg width="22" height="20" viewBox="0 0 22 20"><path d="M9 0a7.500 7.500 0 1 1-9 9c5 2 9-2 9-9z" fill="#fcc421"/><path d="M6 19a4.500 4.500 0 0 1 1-9 6 6 0 0 1 10 0c6 0 6 9 0 9z" fill="#d5ebfb"/></svg></div>
 <div class="justify-content-end"><svg width="29" height="16"><text y="12.500" font-size="14" fill="#fff" textLength="28" lengthAdjust="spacingAndGlyphs">20°C</text></svg></div>
 <div><svg width="12" height="7" viewBox="0 0 12 7" fill="none" stroke="#fff" stroke-width="1.300" class="ms-2"><path d="M.5 6.500L6 1l5.500 5.500"/></svg></div>
 <div><svg width="12" height="16" viewBox="0 0 12 16" fill="none" stroke="#fff" stroke-width="1.200" class="ms-2"><path d="M1 5h7v6H1zM8 7.500L11 5v6L8 8.500M2 2.500q3-2 6 0M2 13.500q3 2 6 0"/></svg></div>
 <div><svg width="16" height="12" viewBox="0 0 16 12" class="ms-2"><path d="M5.500 3.500h9v6h-9zM0 3h4M1 0v3M3 0v3M.5 3v2.500h3V3M2 6v3h3" fill="none" stroke="#fff"/><path d="M7 5h6v3H7zM15 5h1v3h-1z" fill="#fff"/></svg></div>
 <div><svg width="15" height="12" viewBox="0 0 15 12" fill="none" stroke="#fff" class="ms-2"><path d="M.5 4v4h2L6 11V1L2.500 4zM8 4q1.500 2 0 4M10 2.500q3 3.500 0 7"/><path d="M12.500 1q4 5 0 10" stroke="#888"/></svg></div>
 <div></div>
 <div class="flex-column lh-1"><span data-w="20" class="mb-1 pb-1">6:41</span><span data-w="57">30/11/2021</span></div>
 <div class="justify-content-end"><svg width="16" height="16" viewBox="0 0 16 16" fill="none" stroke="#fff" stroke-width="1.200"><path d="M.6 1h14.800v11H10.500L8 14.500 5.500 12H.6z"/></svg></div>
 <div class="justify-content-end pe-1"><svg width="1" height="40"><path d="M.5 0v40" stroke="#666"/></svg></div>
</div>

<script src="https://cdn.jsdelivr.net/npm/bootstrap@5.3.0/dist/js/bootstrap.bundle.min.js"></script>
<script>
// Condense or expand labels to their column width.
document.querySelectorAll('[data-w]').forEach(e=>{
  const w=+e.dataset.w, n=e.textContent.length, r=document.createRange();
  r.selectNodeContents(e);
  e.style.letterSpacing=((w-r.getBoundingClientRect().width)/n).toFixed(3)+'px';
});
// Rulers
let h='<rect x="1.500" y="138.500" width="22" height="21" fill="#ced3db" stroke="#80858d"/><rect x="5.500" y="142.500" width="13" height="13" fill="#f5f6f8" stroke="#9aa0a8"/><path d="M11 147v5.500h5" stroke="#333" stroke-width="2" fill="none"/>';
h+='<rect x="5.500" y="170.500" width="13" height="533" fill="#c8cdd6" stroke="#7f858e"/><rect x="6" y="371" width="12" height="39" fill="#fafafa"/><path d="M5 370.500h13M5 410.500h13" stroke="#7f858e"/>';
const vn=[[10,179],[8,218],[6,255.500],[4,293],[2,331],[2,407],[4,444],[6,482],[8,520],[10,558],[12,595],[14,632.500],[16,670]];
vn.forEach(([n,y])=>{h+=`<text transform="translate(16 ${y}) rotate(-90)" text-anchor="middle" font-size="9.500" fill="#444">${n}</text>`});
h+='<path d="M10 378.500h5M10 398.500h5M10 358.500h5M10 698.500h5" stroke="#555"/>';
vn.forEach(([n,y])=>{if(y!=407)h+=`<path d="M10 ${Math.round(y+9)}.500h5${y>185?`M10 ${Math.round(y-10)}.500h5`:''}" stroke="#555"/>`});
vr.innerHTML=h;
h='<rect x="64.500" y="143.500" width="410" height="12" fill="#ccd0d8" stroke="#7f858e"/><rect x="90" y="144" width="81" height="11" fill="#fafafa"/>';
for(let i=1;i<=10;i++){const x=89.500+37.750*i;
 h+=`<text x="${x}" y="153" text-anchor="middle" font-size="9.800" fill="#444">${i*2}</text><path d="M${Math.round(x-9.500)}.500 147.500v5${i<10?`M${Math.round(x+8.500)}.500 147.500v5`:''}" stroke="#444"/>`}
h+='<path d="M79.500 147.500v5M113.500 157v3M137.500 157v3M161.500 157v3" stroke="#555"/><path d="M85.500 141v3l4 4 4-4v-3zM85.500 156v-3l4-4 4 4v3zM85.500 156.500h8v4h-8zM167.500 155.500v-2l4-4 4 4v2z" fill="#f1f2f4" stroke="#777"/>';
hr.innerHTML=h;
// Flowchart nodes: d = decision, p = input/output, r = process
const nodes=[['d',197.5,281,2],['p',230.5,281.5,3],['d',265,282,4],['p',306,282,5],['r',349,282,6],
['d',265,306,7],['p',303.5,307,8],['d',343,307,9],['p',388.5,307,10],['r',387,328,11],['p',342.5,330,12],
['d',265,360,13],['p',302.5,359.5,14],['d',341.5,359.5,15],['r',382,359.5,16],['p',340.5,382.5,17],
['d',265,414,18],['p',299,414.5,19],['d',341,414,20],['p',377.5,414.5,21],['p',340.5,437.5,22],
['d',265,474,23],['d',295,474,24],['p',324,473.5,25],['d',353,474,26],['p',352,498,27],['p',294,499,28],
['d',265,529.5,29],['r',302,529.5,30],['d',229,555,31],['p',198,554.5,33]];
const arrows=['166.5 269.5V275','177 281.5H187','208 281H219','243 282H254','276 282H295','319 282H332','365 281H412','228.5 306H254','276 306H293','315 307H333','352 307H378','343 316V323','386.500 314V321','403 327H412','342 337V342H412',
'228.500 360H253','276 360H291','314 359.500H330','353 359.500H366','398 359H412','341.500 368V376','352 382.500H412',
'228.500 414H253','276 414H289','311 414H331','352 414.500H367','389 415.500H412','341 423V430','351 437.500H412',
'228.500 474H253','276 474H283','306 474H313','335 474H341','353 483V491','353 465V457H412','365 497.500H375.500V474H366','295 482V491','295 506V510.500H412',
'228.500 529.500H254','276 529.500H286','318 529.500H343','218 554.500H209','197.500 548V290','228.500 288V546','197.500 265.500V273'];
h='<defs><marker id="ar" markerWidth="4" markerHeight="4" refX="3.500" refY="2" orient="auto" markerUnits="userSpaceOnUse"><path d="M0 0l4 2-4 2z" fill="#000"/></marker>';
[['g','#74bb4b','#559b32'],['o','#fb8138','#ea6613'],['y','#ffc921','#f4b400'],['b','#3f75d4','#2958b6']].forEach(c=>h+=`<linearGradient id="g${c[0]}" x2="0" y2="1"><stop stop-color="${c[1]}"/><stop offset="1" stop-color="${c[2]}"/></linearGradient>`);
h+='</defs><text x="257" y="251.300" font-size="4.200" font-weight="700" fill="#222" textLength="23.500" lengthAdjust="spacingAndGlyphs">FLOWCHART</text>';
h+='<path d="M197.500 265.500H412.500V511" fill="none" stroke="#777" stroke-width=".7"/>';
arrows.forEach(a=>h+=`<path d="M${a}" fill="none" stroke="#444" stroke-width=".8" marker-end="url(#ar)"/>`);
const lab=(x,y,t)=>`<text x="${x}" y="${y}" text-anchor="middle" font-size="4" fill="#fff">${t}</text>`;
nodes.forEach(([k,x,y,t])=>{
 if(k=='d')h+=`<path d="M${x-11.3} ${y}L${x} ${y-9}L${x+11.3} ${y}L${x} ${y+9}z" fill="url(#gg)"/>`;
 if(k=='p')h+=`<path d="M${x-8.3} ${y-6.7}H${x+12.7}L${x+8.3} ${y+6.7}H${x-12.7}z" fill="url(#go)"/>`;
 if(k=='r')h+=`<rect x="${x-16}" y="${y-6.7}" width="32" height="13.400" rx=".8" fill="url(#gy)" stroke="#f0b51c" stroke-width=".5"/>`;
 h+=lab(x,y+(k=='p'?.5:1.3),t)});
h+='<ellipse cx="166.300" cy="262.600" rx="12.300" ry="7.200" fill="url(#gb)"/>'+lab(166,263.3,'Start')+'<ellipse cx="353.300" cy="529.500" rx="11.300" ry="6.500" fill="url(#gb)"/>'+lab(353.3,530.3,'End');
h+='<path d="M156 281.500l3.500-6h14l3.500 6-3.500 6h-14z" fill="#0a0a0a"/>'+lab(166.5,282.8,1);
h+='<text x="263.500" y="368" font-size="23" fill="#38e0e0" textLength="69.500" lengthAdjust="spacingAndGlyphs" font-family="Open Sans">SIGIT17</text>';
// Selected text box with its handles
h+='<path d="M131.500 346v14" stroke="#333" stroke-dasharray="4 4"/><rect x="85" y="365" width="94" height="48.500" fill="#fff" stroke="#35506f"/><path d="M85 365h94M85.500 365v48" stroke="#000" stroke-width="1.500" stroke-dasharray="13 2"/><path d="M85 413.500h94M179 365v48" stroke="#000" stroke-dasharray="7 5"/>';
h+='<g font-size="6.300" fill="#333"><text x="90" y="380" textLength="18">Nama</text><text x="114" y="380" textLength="35">: M. AKMAL</text><text x="153" y="380" textLength="7">AL</text><text x="90" y="390.500" textLength="26">ABDILAH</text><text x="90" y="400" textLength="13">NIM</text><text x="114" y="400" textLength="40">: 312110034</text></g><path d="M90 380.500l1.500-1.500 1.500 1.500 1.500-1.500 1.500 1.500 1.500-1.500 1.500 1.500 1.500-1.500 1.500 1.500 1.500-1.500 1.500 1.500 1.500-1.500 1.500 1.500" fill="none" stroke="#e22" stroke-width=".9"/><path d="M153.800 373v9" stroke="#000" stroke-width="1.500"/>';
h+='<g fill="#fff" stroke="#39434f">'+[[84.5,364.7],[178.7,364.7],[84.5,413.5],[178.7,413.5]].map(p=>`<circle cx="${p[0]}" cy="${p[1]}" r="4.300"/>`).join('')+'</g><g fill="#fff" stroke="#4d6a8a">'+[[131.5,364.5],[84.5,388.5],[178.5,388.5],[131.5,413.5]].map(p=>`<rect x="${p[0]-3.3}" y="${p[1]-3.3}" width="6.600" height="6.600"/>`).join('')+'</g><circle cx="131.500" cy="340.500" r="4.500" fill="#80d639" stroke="#4d7a2c"/>';
doc.innerHTML=h;
</script>
</body>
</html>
